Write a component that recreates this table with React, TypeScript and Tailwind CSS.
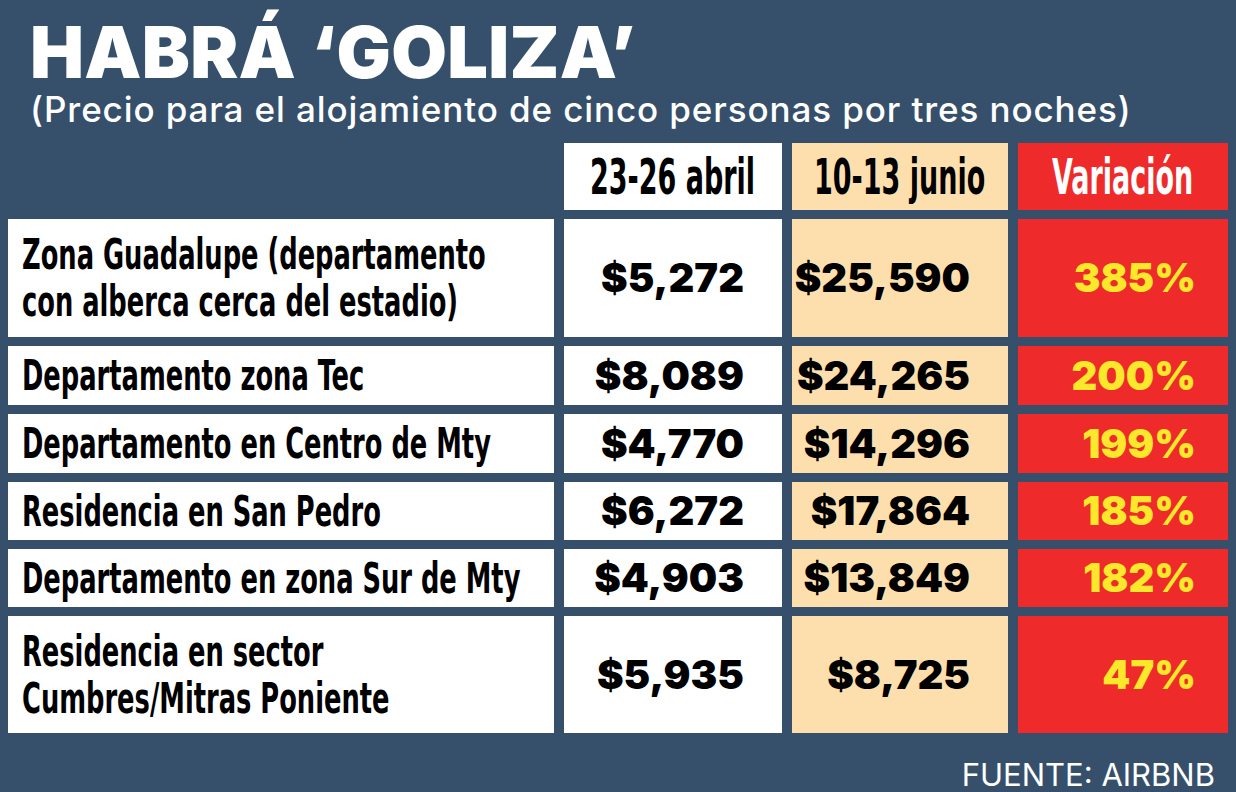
const ROWS = [
  { label: ['Zona Guadalupe (departamento', 'con alberca cerca del estadio)'], abril: '$5,272', junio: '$25,590', pct: '385%', h: 'h-[118px]' },
  { label: ['Departamento zona Tec'], abril: '$8,089', junio: '$24,265', pct: '200%', h: 'h-[59px]' },
  { label: ['Departamento en Centro de Mty'], abril: '$4,770', junio: '$14,296', pct: '199%', h: 'h-[59px]' },
  { label: ['Residencia en San Pedro'], abril: '$6,272', junio: '$17,864', pct: '185%', h: 'h-[58px]' },
  { label: ['Departamento en zona Sur de Mty'], abril: '$4,903', junio: '$13,849', pct: '182%', h: 'h-[58px]' },
  { label: ['Residencia en sector', 'Cumbres/Mitras Poniente'], abril: '$5,935', junio: '$8,725', pct: '47%', h: 'h-[117px]' },
]

const narrow = "font-['Liberation_Sans_Narrow','DejaVu_Sans_Condensed',sans-serif] font-bold whitespace-nowrap"

export default function App() {
  return (
    <div className="relative h-[792px] w-[1236px] overflow-hidden bg-[#36506c] font-['Inter',sans-serif]">
      {/* Title */}
      <div className="pl-[30px] pt-[16px]">
        <h1 className="text-[72px] font-black leading-none tracking-[0.3px] text-white">HABRÁ ‘GOLIZA’</h1>
        <p className="mt-[4px] text-[35px] font-medium leading-none tracking-[0.9px] text-white">
          (Precio para el alojamiento de cinco personas por tres noches)
        </p>
      </div>

      {/* Table */}
      <div className="ml-[8px] mt-[16px] grid grid-cols-[546px_218px_216px_210px] gap-x-[10px] gap-y-[9px]">
        <div className="h-[67px]" />
        <div className="flex h-[67px] items-center justify-center overflow-hidden bg-white">
          <span className={`${narrow} inline-block scale-x-[0.6] text-[50px] leading-none text-black`}>23-26 abril</span>
        </div>
        <div className="flex h-[67px] items-center justify-center overflow-hidden bg-[#fddfae]">
          <span className={`${narrow} inline-block scale-x-[0.6] text-[50px] leading-none text-black`}>10-13 junio</span>
        </div>
        <div className="flex h-[67px] items-center justify-center overflow-hidden bg-[#ee2b2a]">
          <span className={`${narrow} inline-block scale-x-[0.6] text-[50px] leading-none text-white`}>Variación</span>
        </div>

        {ROWS.map((r) => (
          <div key={r.pct} className="contents">
            <div className={`flex flex-col justify-center overflow-hidden bg-white pl-[14px] ${r.h}`}>
              {r.label.map((l) => (
                <span
                  key={l}
                  className={`${narrow} block origin-left scale-x-[0.665] text-[43px] leading-[47px] text-black`}
                >
                  {l}
                </span>
              ))}
            </div>
            <div className="flex items-center justify-end bg-white pr-[38px]">
              <span className="text-[40px] font-black leading-none text-black">{r.abril}</span>
            </div>
            <div className="flex items-center justify-end bg-[#fddfae] pr-[38px]">
              <span className="text-[40px] font-black leading-none text-black">{r.junio}</span>
            </div>
            <div className="flex items-center justify-end bg-[#ee2b2a] pr-[32px]">
              <span className="text-[40px] font-black leading-none text-[#fbe82a]">{r.pct}</span>
            </div>
          </div>
        ))}
      </div>

      {/* Source */}
      <div className="mt-[26px] pr-[21px] text-right text-[31px] leading-none text-white">FUENTE: AIRBNB</div>
    </div>
  )
}
